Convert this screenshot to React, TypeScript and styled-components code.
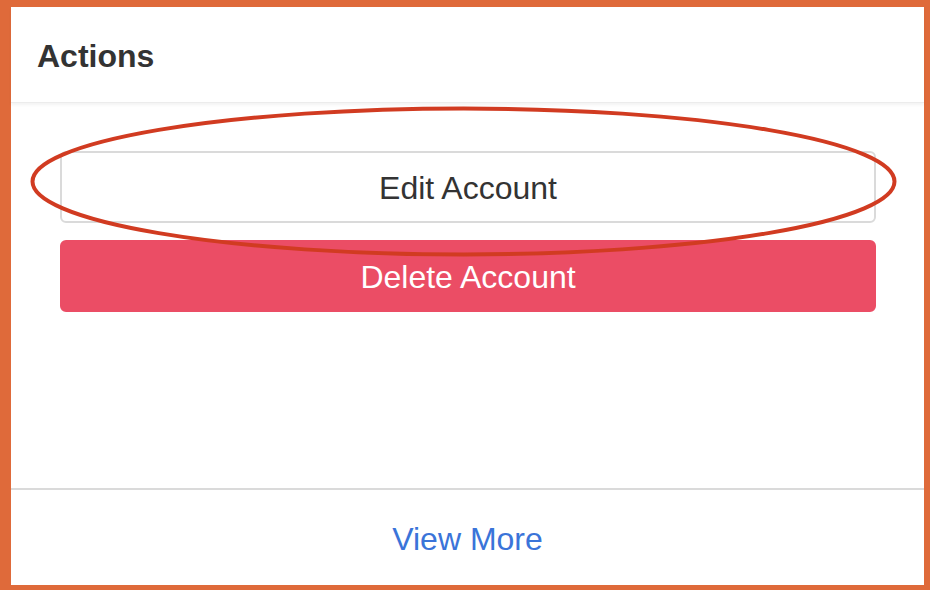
import { FC } from 'react';
import styled, { createGlobalStyle } from 'styled-components';

const App: FC = () => {
  return (
    <>
      <GlobalStyle />
      <Frame>
        <Card>
          <Header>
            <Title>Actions</Title>
          </Header>
          <Body>
            <Button>Edit Account</Button>
            <Button $danger>Delete Account</Button>
          </Body>
          <Footer>
            <FooterLink href="#">View More</FooterLink>
          </Footer>
          <Annotation viewBox="0 0 930 590" aria-hidden="true">
            <ellipse cx="463.5" cy="181.5" rx="431" ry="73" fill="none" stroke="#d13b21" strokeWidth="4" />
          </Annotation>
        </Card>
      </Frame>
    </>
  );
};

// Styles
const GlobalStyle = createGlobalStyle`
  html, body {
    margin: 0;
    padding: 0;
    background: #df6a3a;
  }
  * { box-sizing: border-box; }
`;

const Frame = styled.div`
  width: 930px;
  height: 590px;
  padding: 7px 6px 5px 11px;
  background: #df6a3a;
`;

const Card = styled.div`
  position: relative;
  height: 100%;
  background: #fff;
  display: flex;
  flex-direction: column;
  font-family: 'Liberation Sans', Arial, sans-serif;
`;

const Header = styled.div`
  height: 96px;
  display: flex;
  align-items: center;
  padding: 4px 26px 0;
  border-bottom: 1px solid #ececec;
  box-shadow: 0 2px 3px rgba(0, 0, 0, 0.05);
`;

const Title = styled.h2`
  margin: 0;
  font-size: 32px;
  font-weight: 700;
  color: #333;
`;

const Body = styled.div`
  flex: 1;
  display: flex;
  flex-direction: column;
  gap: 17px;
  padding: 48px 48px 0 49px;
`;

const Button = styled.button<{ $danger?: boolean }>`
  height: 72px;
  width: 100%;
  padding-top: 3px;
  border-radius: 6px;
  font-family: inherit;
  font-size: 32px;
  cursor: pointer;
  border: 2px solid ${({ $danger }) => ($danger ? '#eb4d65' : '#dadada')};
  background: ${({ $danger }) => ($danger ? '#eb4d65' : '#fff')};
  color: ${({ $danger }) => ($danger ? '#fff' : '#333')};
`;

const Footer = styled.div`
  height: 97px;
  border-top: 2px solid #dadada;
  display: flex;
  align-items: center;
  justify-content: center;
`;

const FooterLink = styled.a`
  font-size: 32px;
  color: #3a74d9;
  text-decoration: none;
  padding-top: 4px;
`;

const Annotation = styled.svg`
  position: absolute;
  left: -11px;
  top: -7px;
  width: 930px;
  height: 590px;
  pointer-events: none;
`;

export default App;
